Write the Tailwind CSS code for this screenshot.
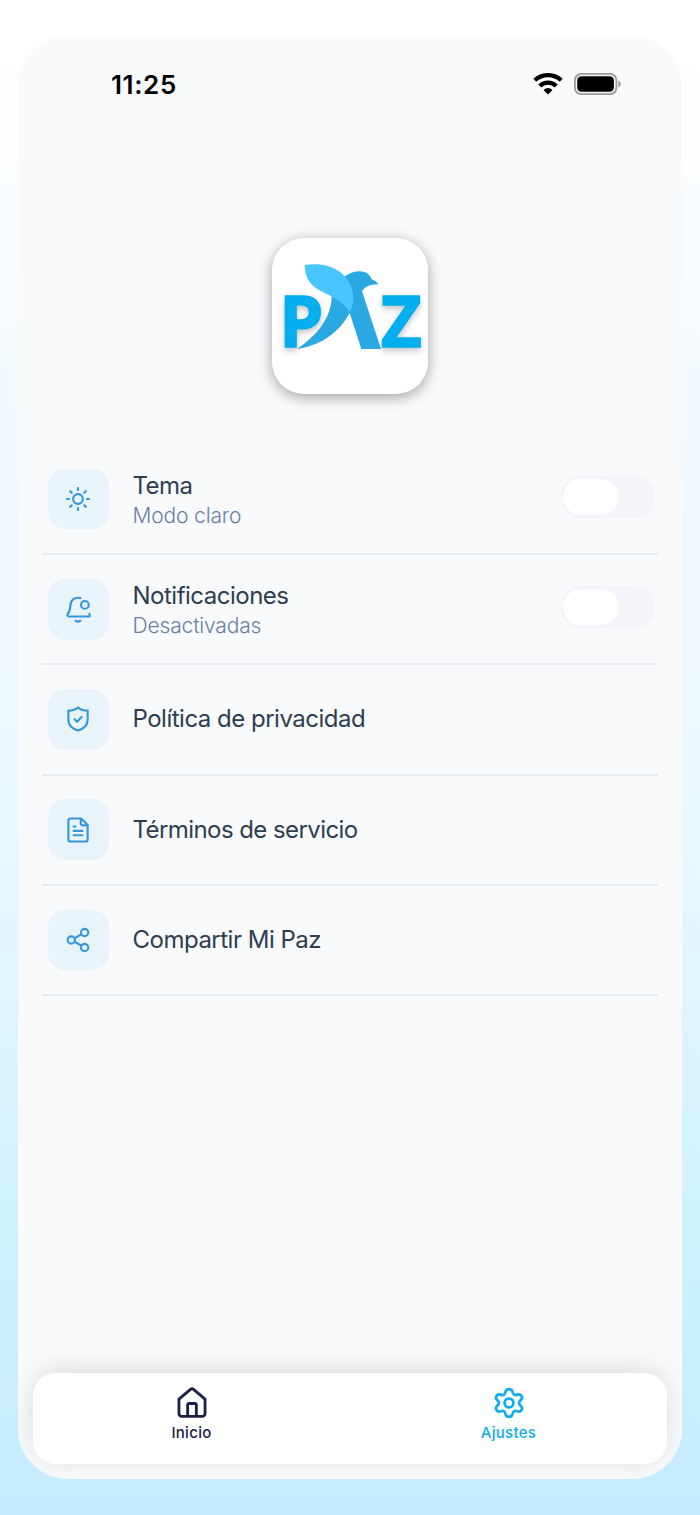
<!DOCTYPE html>
<html lang="es">
<head>
<meta charset="utf-8">
<title>Mi Paz</title>
<script src="https://cdn.jsdelivr.net/npm/@tailwindcss/browser@4"></script>
</head>
<body class="w-[700px] h-[1515px] overflow-hidden px-[18px] pt-9 pb-9 bg-[linear-gradient(180deg,#fff_0%,#fdfeff_8%,#f6fcff_20%,#f0f9ff_32%,#eef8ff_46%,#e6f7ff_58%,#d9f3ff_72%,#cdf0ff_85%,#c5ebff_100%)] font-['Inter',sans-serif]">
<main class="h-[1443px] rounded-[50px] bg-[#f9fafc] overflow-hidden flex flex-col">
  <header class="h-[97px] shrink-0 flex items-center justify-between pl-[93px] pr-[60px]">
    <time class="text-[26px] font-semibold text-black tracking-[0.6px]">11:25</time>
    <div class="flex items-center gap-[11px] -mt-[1px]">
      <svg class="w-[30px] h-[22px]" viewBox="0 0 30 22" fill="none" stroke="#000" stroke-width="4.200">
        <path d="M1.800 7.300a19.300 19.300 0 0 1 26.400 0"/><path d="M6.700 13a12 12 0 0 1 16.600 0"/>
        <path d="M15 21.500l-4.500-4.600a6.500 6.500 0 0 1 9 0z" fill="#000" stroke="none"/>
      </svg>
      <svg class="w-[48px] h-[22px]" viewBox="0 0 48 22"><rect x=".9" y=".9" width="41.5" height="20.2" rx="6.3" fill="none" stroke="#97999b" stroke-width="1.8"/><rect x="3.2" y="3.3" width="36.7" height="15.4" rx="4.2"/><path d="M44.4 7.5c3 1.2 3 5.800 0 7z" fill="#97999b"/></svg>
    </div>
  </header>
  <div class="mt-[105px] mb-[51px] flex justify-center">
    <div class="size-[156px] rounded-[32px] bg-white shadow-[0_4px_14px_rgba(0,0,0,0.3),0_0_16px_rgba(0,0,0,0.06)]">
      <svg class="size-[156px]" viewBox="66 54 468 468">
        <g class="drop-shadow-[0_8px_10px_rgba(0,0,0,0.25)]" fill="#04aeef" stroke="#04aeef" stroke-width="4" font-family="Open Sans" font-weight="700" font-size="213">
          <text x="87" y="381">P</text><text x="392" y="381">Z</text>
        </g>
        <path d="M245 230C244 290 204 345 140 387C215 375 265 340 299 279L334 387H393L336 214C346 198 362 192 386 194C380 186 374 181 365 178C357 150 318 144 283 170Z" fill="#29a8e2"/>
        <path d="M164 135C235 123 291 155 306 207C314 238 309 260 299 276C281 249 258 235 222 218C183 200 165 178 164 135Z" fill="#49c5ff"/>
      </svg>
    </div>
  </div>
  <ul class="px-6 text-[#2c3e50]">
    <li class="h-[110.200px] border-b-2 border-[#e5ebf1] flex items-center px-[6px]">
      <span class="size-[60.500px] rounded-[17px] bg-[#e8f3fa] flex items-center justify-center text-[#3498db]">
        <svg class="size-[30px]" viewBox="0 0 24 24" fill="none" stroke="currentColor" stroke-width="1.700" stroke-linecap="round"><circle cx="12" cy="12" r="3.900"/><path d="M12 3.200v1.600M12 19.200v1.600M3.200 12h1.600M19.200 12h1.600M5.800 5.800l1.100 1.100M17.100 17.100l1.100 1.100M5.800 18.200l1.100-1.100M17.100 6.900l1.100-1.100"/></svg>
      </span>
      <div class="ml-6 mt-1 flex-1"><p class="text-[24px] leading-[30px] tracking-[-0.55px]">Tema</p><p class="text-[21px] leading-[30px] font-light tracking-[-0.15px] text-[#6681a3]">Modo claro</p></div>
      <span class="w-[95px] h-[42px] rounded-full bg-[#f4f5fa] p-[3px] -mt-1 -mr-[3px]"><i class="block w-[56px] h-9 rounded-full bg-white"></i></span>
    </li>
    <li class="h-[110.200px] border-b-2 border-[#e5ebf1] flex items-center px-[6px]">
      <span class="size-[60.500px] rounded-[17px] bg-[#e8f3fa] flex items-center justify-center text-[#3498db]">
        <svg class="size-[30px]" viewBox="0 0 24 24" fill="none" stroke="currentColor" stroke-width="1.700" stroke-linecap="round" stroke-linejoin="round"><path d="M14 3.200C9.500 2.200 6.300 4.600 6 8.500c-.3 4-.5 5.500-2.100 7.300-.8.800-.4 2.200.8 2.200h16c1 0 1-1.200.3-2"/><circle cx="17.500" cy="8.700" r="3.100"/><path d="M10.200 21.300c1 .9 2.600.9 3.600 0"/></svg>
      </span>
      <div class="ml-6 mt-1 flex-1"><p class="text-[24px] leading-[30px] tracking-[-0.5px]">Notificaciones</p><p class="text-[21px] leading-[30px] font-light tracking-[-0.15px] text-[#6681a3]">Desactivadas</p></div>
      <span class="w-[95px] h-[42px] rounded-full bg-[#f4f5fa] p-[3px] -mt-1 -mr-[3px]"><i class="block w-[56px] h-9 rounded-full bg-white"></i></span>
    </li>
    <li class="h-[110.200px] border-b-2 border-[#e5ebf1] flex items-center px-[6px]">
      <span class="size-[60.500px] rounded-[17px] bg-[#e8f3fa] flex items-center justify-center text-[#3498db]">
        <svg class="size-[30px]" viewBox="0 0 24 24" fill="none" stroke="currentColor" stroke-width="1.700" stroke-linecap="round" stroke-linejoin="round"><path d="M12 2.800C10.500 4.300 7.200 5.300 4.300 5.300v7.200c0 4.300 3.500 7.300 7.700 8.700 4.200-1.400 7.700-4.400 7.700-8.700V5.300C16.800 5.300 13.500 4.300 12 2.800Z"/><path d="M9.200 12.200l2 2 3.700-3.900"/></svg>
      </span>
      <p class="ml-6 text-[24px] leading-[30px] tracking-[-0.5px]">Política de privacidad</p>
    </li>
    <li class="h-[110.200px] border-b-2 border-[#e5ebf1] flex items-center px-[6px]">
      <span class="size-[60.500px] rounded-[17px] bg-[#e8f3fa] flex items-center justify-center text-[#3498db]">
        <svg class="size-[30px]" viewBox="0 0 24 24" fill="none" stroke="currentColor" stroke-width="1.700" stroke-linecap="round" stroke-linejoin="round"><path d="M14.500 2.800H6A1.700 1.700 0 0 0 4.300 4.500v15A1.700 1.700 0 0 0 6 21.200h12a1.700 1.700 0 0 0 1.700-1.700V8Z"/><path d="M14.200 3v3.800a1.500 1.500 0 0 0 1.500 1.500h3.800M8.500 9.200h1.500M8.500 12.700h7M8.500 16.200h7"/></svg>
      </span>
      <p class="ml-6 text-[24px] leading-[30px] tracking-[-0.57px]">Términos de servicio</p>
    </li>
    <li class="h-[110.200px] border-b-2 border-[#e5ebf1] flex items-center px-[6px]">
      <span class="size-[60.500px] rounded-[17px] bg-[#e8f3fa] flex items-center justify-center text-[#3498db]">
        <svg class="size-[30px]" viewBox="0 0 24 24" fill="none" stroke="currentColor" stroke-width="1.700"><circle cx="17.300" cy="6" r="2.900"/><circle cx="6.600" cy="12" r="2.900"/><circle cx="17.300" cy="18" r="2.900"/><path d="M9.200 10.600l5.500-3.100M9.200 13.400l5.500 3.100"/></svg>
      </span>
      <p class="ml-6 text-[24px] leading-[30px] tracking-[-0.5px]">Compartir Mi Paz</p>
    </li>
  </ul>
  <nav class="mt-auto mx-[15px] mb-[15px] h-[91px] shrink-0 rounded-[22px] bg-white shadow-[0_-3px_24px_rgba(0,0,0,0.12)] grid grid-cols-2 text-[15px] font-medium tracking-[0.3px]">
    <a class="flex flex-col items-center pt-3 text-[#1b2148]">
      <svg class="size-9" viewBox="0 0 24 24" fill="none" stroke="currentColor" stroke-width="1.900" stroke-linecap="round" stroke-linejoin="round"><path d="M3.300 9.400L11 2.900a1.600 1.600 0 0 1 2 0L20.700 9.400V19a1.900 1.900 0 0 1-1.900 1.900H5.200A1.900 1.900 0 0 1 3.300 19Z"/><path d="M9.100 20.500v-7.200a1 1 0 0 1 1-1h3.800a1 1 0 0 1 1 1v7.200"/></svg>
      <span class="leading-[22px] mt-[1px]">Inicio</span>
    </a>
    <a class="flex flex-col items-center pt-3 text-[#0baeea]">
      <svg class="size-9" viewBox="0 0 36 36" fill="none" stroke="currentColor" stroke-width="2.900" stroke-linejoin="round"><g transform="translate(.9 .7) scale(.95)"><path d="M14.300 6.500C15.100 2.500 20.900 2.500 21.700 6.500C22.200 9.600 24.300 10.500 26.800 9.400C30.600 7.900 33.500 12.600 30.300 15.200C28 17 28 19.300 30.300 21.100C33.500 23.700 30.600 28.400 26.800 26.900C24.300 25.800 22.200 26.700 21.700 29.800C20.900 33.800 15.100 33.800 14.300 29.800C13.800 26.700 11.700 25.800 9.200 26.900C5.400 28.400 2.500 23.700 5.700 21.100C8 19.300 8 17 5.700 15.200C2.500 12.600 5.400 7.900 9.200 9.400C11.700 10.500 13.800 9.600 14.300 6.500Z"/><circle cx="18" cy="18.200" r="4.700"/></g></svg>
      <span class="leading-[22px] mt-[1px]">Ajustes</span>
    </a>
  </nav>
</main>
</body>
</html>
